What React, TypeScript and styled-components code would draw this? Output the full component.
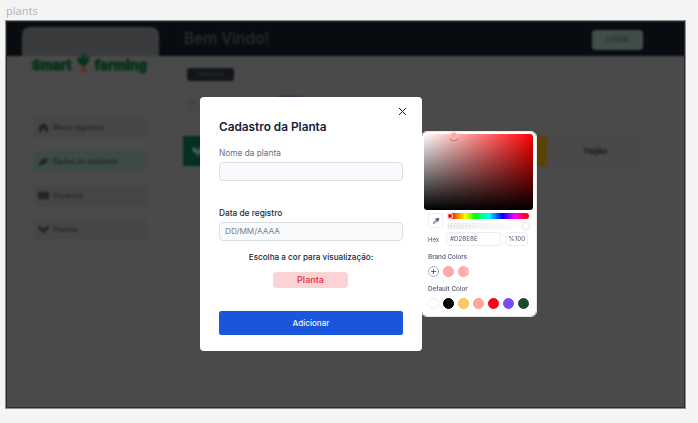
import React from "react";
import styled, { createGlobalStyle } from "styled-components";

const GlobalStyle = createGlobalStyle`
  * { box-sizing: border-box; }
  body { margin: 0; background: #f4f4f4; font-family: Inter, "Liberation Sans", sans-serif; }
`;

const Canvas = styled.div`
  width: 698px;
  height: 423px;
  padding: 2px 0 0 5px;
  overflow: hidden;
  background: #f4f4f4;
`;
const FrameLabel = styled.div`
  height: 18px;
  padding-left: 1px;
  font: 11px/18px "Noto Sans", sans-serif;
  color: #b5b5b5;
`;
const Frame = styled.div`
  position: relative;
  width: 681px;
  height: 389px;
  border: 1px solid #8c8d8e;
  background: #4a4a4a;
`;
const Clip = styled.div`
  height: 387px;
  overflow: hidden;
  border: 1px solid #2b2c2e;
`;
const Page = styled.div`
  height: 385px;
  filter: blur(1.3px);
  color: #303133;
`;
const Header = styled.header`
  display: flex;
  align-items: flex-end;
  height: 37px;
  margin: -3px -4px 0;
  padding-left: 19px;
  background: #080c11;
`;
const LogoTab = styled.div`
  width: 137px;
  height: 29px;
  border-radius: 8px 8px 0 0;
  background: #3a3b3d;
`;
const Welcome = styled.h1`
  flex: 1;
  margin: 0 0 7px 25px;
  font-size: 15.5px;
  line-height: 20px;
  font-weight: 500;
  color: #2b2e33;
`;
const Login = styled.span`
  width: 51px;
  height: 20px;
  margin: 0 45px 6px 0;
  border-radius: 4px;
  background: #414d49;
  color: #272e2c;
  font-size: 7px;
  font-weight: 600;
  line-height: 20px;
  text-align: center;
`;
const Body = styled.div`
  display: grid;
  grid-template-columns: 176px 1fr;
`;
const Sidebar = styled.aside`
  padding-left: 25px;
`;
const Logo = styled.div`
  display: flex;
  align-items: center;
  justify-content: space-between;
  width: 115px;
  height: 20px;
  margin-top: -1px;
  color: #07331a;
  font: 800 13.2px/20px Inter, sans-serif;
  -webkit-text-stroke: 0.9px #07331a;
  svg { flex: none; margin: -5px -2px 0; }
  span:last-child { letter-spacing: 0.15px; }
`;
const Nav = styled.nav`
  display: grid;
  gap: 14.3px;
  width: 112px;
  margin: 42px 0 0 2px;
`;
const NavItem = styled.div<{ $active?: boolean }>`
  display: flex;
  align-items: center;
  gap: 4px;
  height: 20px;
  padding-left: 4px;
  background: ${(p) => (p.$active ? "#3c4b46" : "#464646")};
  color: ${(p) => (p.$active ? "#1c2722" : "#262626")};
  font-size: 7px;
  font-weight: 600;
  svg { width: 11px; height: 11px; fill: #222425; }
`;
const Main = styled.main`
  padding-top: 12px;
`;
const Tag = styled.div`
  width: 47px;
  height: 13px;
  margin-left: 4px;
  border-radius: 3px;
  background: #12161b;
  color: #303337;
  font-size: 5px;
  line-height: 13px;
  text-align: center;
`;
const Filters = styled.div`
  display: flex;
  gap: 6px;
  height: 16px;
  margin: 15px 0 0 3px;
`;
const Search = styled.div`
  width: 85px;
  border-radius: 3px;
  padding-left: 3px;
  background: #484848;
  color: #3b3b3b;
  font-size: 6px;
  line-height: 16px;
`;
const FilterButton = styled.div`
  width: 25px;
  border-radius: 2px;
  background: #2d3450;
`;
const Tabs = styled.div`
  display: flex;
  height: 30px;
  margin-top: 24px;
  line-height: 30px;
`;
const Tab = styled.div<{ $color: string; $width: number }>`
  width: ${(p) => p.$width}px;
  background: ${(p) => p.$color};
  color: #191a1d;
  font-size: 8px;
  font-weight: 700;
  text-align: center;
`;
const TabIcon = styled.svg`
  display: block;
  width: 12px;
  height: 12px;
  margin: 9px 0 0 9px;
  fill: #4c5f58;
`;

const Dialog = styled.section`
  position: absolute;
  left: 194px;
  top: 76px;
  width: 222px;
  height: 254px;
  padding: 23px 19px 0;
  border-radius: 4px;
  background: #fff;
  color: #1b2336;
`;
const Close = styled.svg`
  position: absolute;
  right: 15px;
  top: 10px;
  width: 9px;
  height: 9px;
  fill: none;
  stroke: #1d1f24;
  stroke-width: 1;
`;
const Title = styled.h2`
  margin: 0 0 11px;
  font-size: 11.8px;
  line-height: 15px;
  font-weight: 600;
  color: #172035;
  white-space: nowrap;
`;
const Label = styled.div<{ $muted?: boolean }>`
  height: 16px;
  font-size: 8.3px;
  line-height: 14px;
  font-weight: ${(p) => (p.$muted ? 400 : 500)};
  color: ${(p) => (p.$muted ? "#687080" : "#20283a")};
`;
const Field = styled.div<{ $space: number }>`
  height: 19px;
  margin: 0 0 ${(p) => p.$space}px;
  padding-left: 5px;
  border: 1px solid #dbdee3;
  border-radius: 4px;
  background: #f8fafc;
  color: #777d88;
  font-size: 8.2px;
  line-height: 17px;
`;
const Hint = styled.div`
  font-size: 8.15px;
  line-height: 12px;
  font-weight: 500;
  text-align: center;
  color: #20283a;
`;
const Chip = styled.div`
  width: 75px;
  height: 16px;
  margin: 9px auto 0 54px;
  border-radius: 4px;
  background: #fbd3d5;
  color: #e32a32;
  font-size: 9px;
  line-height: 16px;
  font-weight: 500;
  text-align: center;
`;
const Submit = styled.button`
  display: block;
  width: 184px;
  height: 24px;
  margin-top: 23px;
  padding: 0;
  border: 0;
  border-radius: 2.5px;
  background: #1a56db;
  color: #edf2ff;
  font: 500 8.1px/24px Inter, sans-serif;
`;

const Picker = styled.section`
  position: absolute;
  left: 415px;
  top: 110px;
  width: 116px;
  height: 186px;
  padding: 3px 4px 0 3px;
  border: 1px solid #e8e8e8;
  border-radius: 6px;
  background: #fff;
  background-clip: padding-box;
  color: #545174;
  font-size: 6px;
`;
const Spectrum = styled.div`
  position: relative;
  width: 109px;
  height: 76px;
  margin-left: -1px;
  margin-top: -1px;
  border-radius: 3px;
  background: linear-gradient(to top, #000, transparent), linear-gradient(to right, #fff, #f00);
`;
const Handle = styled.i`
  position: absolute;
  left: 26px;
  top: -2px;
  width: 8px;
  height: 8px;
  border: 1px solid #ffd0d0;
  border-radius: 50%;
  background: #ffa5a7;
  box-shadow: 0 1px 1px #0005;
`;
const Controls = styled.div`
  display: flex;
  gap: 4px;
  margin: 3px 0 0 3px;
`;
const Dropper = styled.div`
  display: grid;
  place-items: center;
  width: 15px;
  height: 15px;
  border: 1px solid #efeff2;
  border-radius: 3px;
  svg { width: 8px; height: 8px; }
`;
const Sliders = styled.div`
  display: grid;
  align-content: start;
  gap: 4px;
  width: 82px;
`;
const Hue = styled.div`
  height: 6px;
  padding: 1px;
  border-radius: 3px;
  background: linear-gradient(90deg, #f00 4%, #ff0 22%, #0f0 34%, #0ff 51%, #00f 67%, #f0f 83%, #f00 98%);
`;
const Alpha = styled.div`
  display: flex;
  justify-content: flex-end;
  height: 6px;
  border-radius: 3px;
  background: linear-gradient(90deg, #fff0, #fff), repeating-conic-gradient(#e4e4e4 0 25%, #f6f6f6 0 50%) 0 0 / 3px 3px;
`;
const Knob = styled.i<{ $fill: string }>`
  width: ${(p) => (p.$fill === "#fff" ? 6 : 4)}px;
  height: ${(p) => (p.$fill === "#fff" ? 6 : 4)}px;
  border-radius: 50%;
  background: ${(p) => p.$fill};
  box-shadow: 0 0 0 1px ${(p) => (p.$fill === "#fff" ? "#e3e3e3" : "#fff")};
`;
const HexRow = styled.div`
  display: flex;
  align-items: center;
  height: 14px;
  margin: 3px 0 0 3px;
`;
const HexLabel = styled.span`
  width: 18.5px;
`;
const Value = styled.span<{ $width: number }>`
  width: ${(p) => p.$width}px;
  height: 14px;
  margin-right: 4px;
  padding-left: 3px;
  border: 1px solid #eeeef2;
  border-radius: 3px;
  line-height: 12px;
  font-size: 6.3px;
  white-space: nowrap;
`;
const Heading = styled.div<{ $top: number }>`
  height: 8px;
  margin: ${(p) => p.$top}px 0 5px 3px;
  font-size: 6.3px;
  line-height: 8px;
  font-weight: 500;
`;
const Swatches = styled.div`
  display: flex;
  gap: 4px;
  height: 11px;
  margin-left: 3px;
`;
const Swatch = styled.span<{ $color: string; $ring?: string }>`
  display: grid;
  place-items: center;
  width: 11px;
  height: 11px;
  border: 1px solid ${(p) => p.$ring || p.$color};
  border-radius: 50%;
  background: ${(p) => p.$color};
`;
const AddSwatch = styled.span`
  width: 11px;
  height: 11px;
  svg { display: block; fill: none; stroke: #545174; }
`;
const FadedSwatch = styled(Swatch)`
  border: 0;
  background: linear-gradient(90deg, #ffa9aa 45%, #ffa9aa66),
    repeating-conic-gradient(#fff 0 25%, #e5a5a6 0 50%) 0 0 / 5px 5px;
`;

const navIcons = {
  house: "M1 5 6 1l5 4v6H8V8H4v3H1z",
  leaf: "M1 10c0-5 4-7 10-8-1 6-4 9-8 7l-1 2z",
  book: "M0 2h5l1 1 1-1h5v8H7l-1 1-1-1H0z",
  sprout: "M0 3c3-1 5 0 6 3 1-3 3-4 6-4 0 4-2 6-5 6v3H5V8C2 8 0 6 0 3z",
};

const navItems: { label: string; icon: keyof typeof navIcons; active?: boolean }[] = [
  { label: "Meus registros", icon: "house" },
  { label: "Dados do ambiente", icon: "leaf", active: true },
  { label: "Usuários", icon: "book" },
  { label: "Plantas", icon: "sprout" },
];

export default function App() {
  return (
    <Canvas>
      <GlobalStyle />
      <FrameLabel>plants</FrameLabel>
      <Frame>
        <Clip>
          <Page>
            <Header>
              <LogoTab />
              <Welcome>Bem Vindo!</Welcome>
              <Login>LOGIN</Login>
            </Header>
            <Body>
              <Sidebar>
                <Logo>
                  <span>Smart</span>
                  <svg width="15" height="22" viewBox="0 0 15 22">
                    <path d="M7 14C2 13 1 8 2 4l3 3c0-3 1-5 3-6l1 5 4-3c1 5-1 10-5 11z" fill="#07331a" />
                    <path d="M7 14h2l2 6H4z" fill="#60301b" />
                  </svg>
                  <span>farming</span>
                </Logo>
                <Nav>
                  {navItems.map((item) => (
                    <NavItem key={item.label} $active={item.active}>
                      <svg viewBox="0 0 12 12"><path d={navIcons[item.icon]} /></svg>
                      {item.label}
                    </NavItem>
                  ))}
                </Nav>
              </Sidebar>
              <Main>
                <Tag>Plantações</Tag>
                <Filters>
                  <Search>Pe</Search>
                  <FilterButton />
                </Filters>
                <Tabs>
                  <Tab $color="#03301f" $width={122}>
                    <TabIcon viewBox="0 0 12 12"><path d={navIcons.sprout} /></TabIcon>
                  </Tab>
                  <Tab $color="#4a4a4a" $width={121} />
                  <Tab $color="#594307" $width={121} />
                  <Tab $color="#494949" $width={97}>Feijão</Tab>
                </Tabs>
              </Main>
            </Body>
          </Page>
        </Clip>
        <Picker>
          <Spectrum><Handle /></Spectrum>
          <Controls>
            <Dropper>
              <svg viewBox="0 0 12 12">
                <path d="m2 10 .5-2.5L6 4l2 2-3.5 3.5z" fill="#bcb9cf" stroke="#77739a" />
                <path d="m6 3 3 3M7 4l2-2 1 1-2 2" fill="none" stroke="#5d5980" strokeWidth="2" strokeLinecap="round" />
              </svg>
            </Dropper>
            <Sliders>
              <Hue><Knob as="div" $fill="#f00" /></Hue>
              <Alpha><Knob $fill="#fff" /></Alpha>
            </Sliders>
          </Controls>
          <HexRow>
            <HexLabel>Hex</HexLabel>
            <Value $width={56}>#D28E8E</Value>
            <Value $width={24}>%100</Value>
          </HexRow>
          <Heading $top={7}>Brand Colors</Heading>
          <Swatches>
            <AddSwatch>
              <svg width="11" height="11" viewBox="0 0 11 11">
                <circle cx="5.5" cy="5.5" r="5" strokeWidth="0.7" strokeDasharray="1.4 0.7" />
                <path d="M5.5 3v5M3 5.5h5" strokeWidth="0.9" />
              </svg>
            </AddSwatch>
            <Swatch $color="#ffa9aa" $ring="#f3a0a2" />
            <FadedSwatch $color="#ffa9aa" />
          </Swatches>
          <Heading $top={8}>Default Color</Heading>
          <Swatches>
            <Swatch $color="#fff" $ring="#eeeeee" />
            <Swatch $color="#000" />
            <Swatch $color="#ffc95c" $ring="#f0bd57" />
            <Swatch $color="#ffa9a7" $ring="#eda078" />
            <Swatch $color="#ff0019" />
            <Swatch $color="#7b49ff" />
            <Swatch $color="#1c4b2b" />
          </Swatches>
        </Picker>
        <Dialog>
          <Close viewBox="0 0 9 9"><path d="m1 1 7 7M8 1 1 8" /></Close>
          <Title>Cadastro da Planta</Title>
          <Label $muted>Nome da planta</Label>
          <Field $space={25} />
          <Label>Data de registro</Label>
          <Field $space={10}>DD/MM/AAAA</Field>
          <Hint>Escolha a cor para visualização:</Hint>
          <Chip>Planta</Chip>
          <Submit>Adicionar</Submit>
        </Dialog>
      </Frame>
    </Canvas>
  );
}
